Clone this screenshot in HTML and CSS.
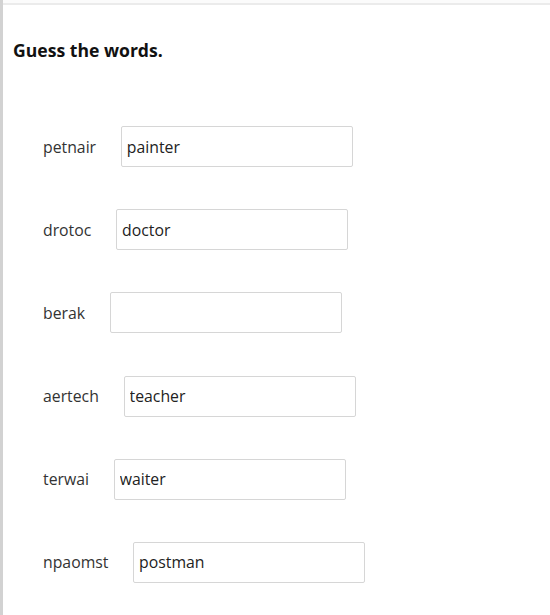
FILE: index.html
```html
<!DOCTYPE html>
<html lang="en">
<head>
    <meta charset="UTF-8">
    <meta name="viewport" content="width=device-width, initial-scale=1.0">
    <title>Guess the words</title>
    <link rel="stylesheet" href="styles.css">
</head>
<body>
    <div class="sheet">
        <div class="topbar"></div>
        <h1 class="task-title">Guess the words.</h1>

        <ul class="word-list">
            <li class="word-row">
                <label class="word-label" for="w1">petnair</label>
                <input class="word-input" id="w1" type="text" value="painter">
            </li>
            <li class="word-row">
                <label class="word-label" for="w2">drotoc</label>
                <input class="word-input" id="w2" type="text" value="doctor">
            </li>
            <li class="word-row">
                <label class="word-label" for="w3">berak</label>
                <input class="word-input" id="w3" type="text" value="">
            </li>
            <li class="word-row">
                <label class="word-label" for="w4">aertech</label>
                <input class="word-input" id="w4" type="text" value="teacher">
            </li>
            <li class="word-row">
                <label class="word-label" for="w5">terwai</label>
                <input class="word-input" id="w5" type="text" value="waiter">
            </li>
            <li class="word-row">
                <label class="word-label" for="w6">npaomst</label>
                <input class="word-input" id="w6" type="text" value="postman">
            </li>
        </ul>
    </div>
</body>
</html>
```

FILE: styles.css
```css
/* Reset and Base Styles */
* {
    margin: 0;
    padding: 0;
    box-sizing: border-box;
}

body {
    font-family: 'Open Sans', 'Liberation Sans', sans-serif;
    color: #222;
    background: #fff;
}

/* Page frame */
.sheet {
    min-height: 100vh;
    border-left: 3px solid #d2d2d2;
}

.topbar {
    height: 5px;
    background: #fbfbfb;
    border-bottom: 2px solid #ebebeb;
}

.task-title {
    font-size: 17.6px;
    font-weight: 700;
    color: #111;
    padding: 32px 0 0 10px;
    line-height: 26px;
}

/* Word rows */
.word-list {
    list-style: none;
    display: flex;
    flex-direction: column;
    gap: 42.2px;
    padding: 63px 0 0 40px;
}

.word-row {
    display: flex;
    align-items: center;
}

.word-label {
    font-size: 15.8px;
    color: #333;
    margin-right: 24.7px;
}

.word-input {
    width: 232px;
    height: 41px;
    padding: 0 5px;
    border: 1px solid #d6d6d6;
    border-radius: 2px;
    font-family: inherit;
    font-size: 15.8px;
    color: #222;
    background: #fff;
}
```
